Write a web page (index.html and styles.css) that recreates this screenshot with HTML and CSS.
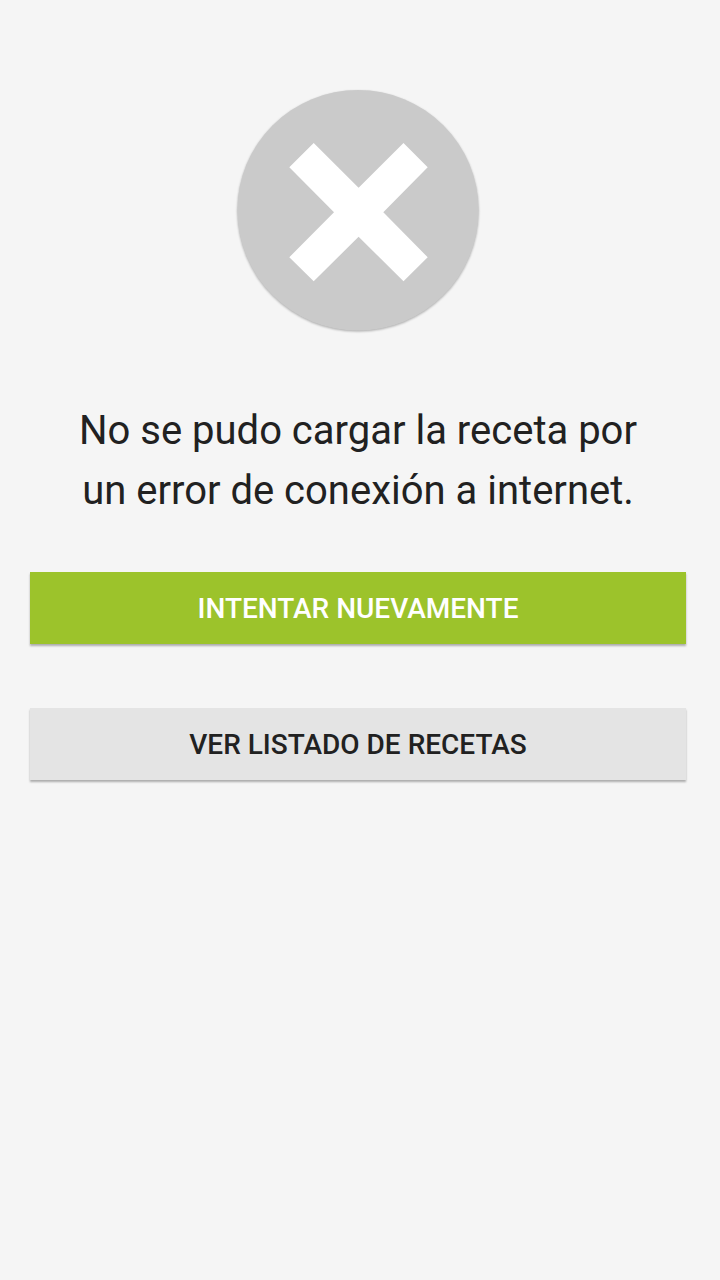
FILE: index.html
```html
<!DOCTYPE html>
<html lang="es">
<head>
<meta charset="utf-8">
<meta name="viewport" content="width=device-width, initial-scale=1">
<title>Error de conexión</title>
<link rel="stylesheet" href="styles.css">
</head>
<body>
<main class="error-screen">
  <svg class="error-icon" viewBox="0 0 242 242" aria-hidden="true">
    <ellipse cx="121" cy="120.3" rx="120.6" ry="120.3" fill="#cacaca"/>
    <path d="M76.7 53L121.6 97.8L166.5 53L190.7 77.3L146.3 122.2L190.7 167.2L166.5 191.3L121.6 146.7L76.7 191.3L52.3 167.2L97 122.2L52.3 77.3Z" fill="#fff"/>
  </svg>
  <p class="error-message">No se pudo cargar la receta por un error de conexión a internet.</p>
  <div class="actions">
    <button class="button button-primary" type="button">Intentar nuevamente</button>
    <button class="button button-secondary" type="button">Ver listado de recetas</button>
  </div>
</main>
</body>
</html>
```
FILE: styles.css
```css
body {
  margin: 0;
  background: #f5f5f5;
  color: #212121;
  font-family: Roboto, sans-serif;
}

.error-screen {
  display: flex;
  flex-direction: column;
  align-items: center;
  padding: 90px 34px 30px 30px;
}

.error-icon {
  width: 242px;
  height: 242px;
  overflow: visible;
  filter: drop-shadow(0 1px 1px rgba(0, 0, 0, 0.3));
}

.error-message {
  max-width: 600px;
  margin: 69px 0 51px;
  font-size: 40px;
  line-height: 60px;
  text-align: center;
}

.actions {
  display: flex;
  flex-direction: column;
  align-self: stretch;
  gap: 64px;
}

.button {
  height: 72px;
  border: 0;
  box-shadow: 0 2px 2px rgba(0, 0, 0, 0.3);
  font-family: inherit;
  font-size: 28px;
  font-weight: 500;
  text-transform: uppercase;
}

.button-primary {
  background: #9cc32b;
  color: #fff;
}

.button-secondary {
  background: #e4e4e4;
  color: #212121;
}
```
